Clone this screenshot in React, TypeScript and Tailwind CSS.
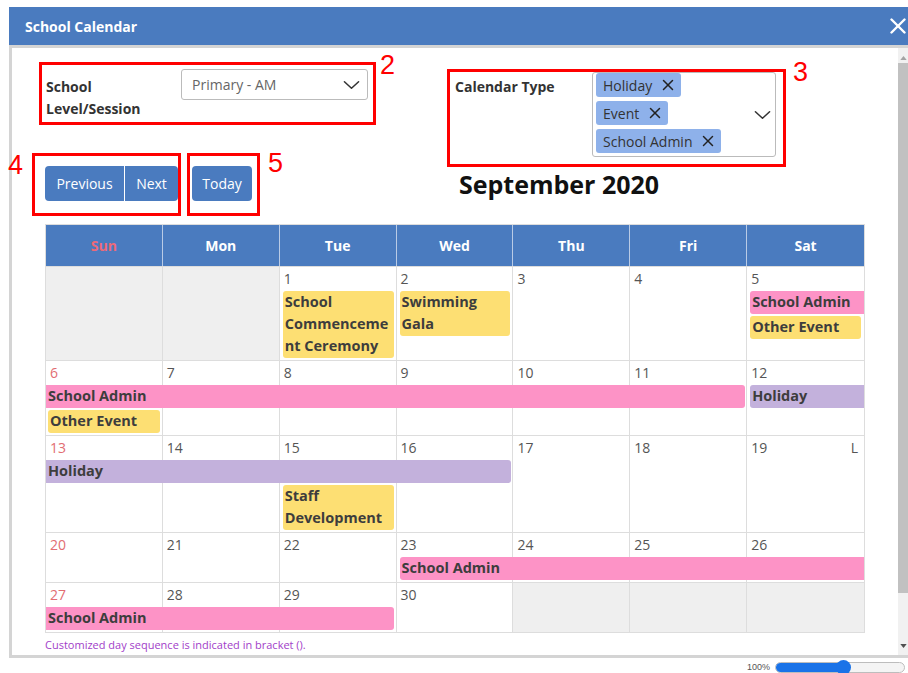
import React from "react";
import { X } from "lucide-react";

type Tone = "yellow" | "pink" | "purple";

const toneBg: Record<Tone, string> = {
  yellow: "bg-[#fddf73]",
  pink: "bg-[#fd93c6]",
  purple: "bg-[#c3b1dc]",
};

const colStart = ["", "col-start-1", "col-start-2", "col-start-3", "col-start-4", "col-start-5", "col-start-6", "col-start-7"];

const dayNames = ["Sun", "Mon", "Tue", "Wed", "Thu", "Fri", "Sat"];

function Chevron({ className = "" }: { className?: string }) {
  return (
    <svg viewBox="0 0 18 10" className={className} fill="none" stroke="#333" strokeWidth="1.6" strokeLinecap="round" strokeLinejoin="round">
      <polyline points="1.5 1.5 9 8.5 16.5 1.5" />
    </svg>
  );
}

function Bar({ label, tone, className = "" }: { label: string; tone: Tone; className?: string }) {
  return (
    <div className={`${toneBg[tone]} ${className} mb-[2px] pb-px pl-[2px] text-[14.5px] font-bold leading-[22px] text-[#3d3d3d] break-words`}>
      {label}
    </div>
  );
}

function Day({ col, day, muted, note }: { col: number; day?: number; muted?: boolean; note?: string }) {
  return (
    <div
      className={`${colStart[col]} row-span-full flex items-start justify-between pl-[4px] pr-[6px] text-[14px] leading-[24px] ${
        col < 7 ? "border-r border-[#dddddd]" : ""
      } ${muted ? "bg-[#efefef]" : "bg-white"} ${col === 1 ? "text-[#e26d72]" : "text-[#555]"}`}
    >
      <span>{day}</span>
      {note && <span className="text-[#555]">{note}</span>}
    </div>
  );
}

function Tag({ label }: { label: string }) {
  return (
    <div className="flex h-[24px] items-center gap-[7px] self-start rounded-[3px] bg-[#8eb1ea] pl-[7px] pr-[4px] text-[14px] text-[#333]">
      {label}
      <X size={18} strokeWidth={2} className="text-[#222]" />
    </div>
  );
}

function Mark({ n, className }: { n: string; className: string }) {
  return <span className={`absolute font-['Liberation_Sans',Arial,sans-serif] text-[27px] leading-none text-[#ff0000] ${className}`}>{n}</span>;
}

const week = "grid grid-cols-7 grid-rows-[24px_auto_auto] border-t border-[#dddddd]";

export default function App() {
  return (
    <div className="relative h-[673px] w-[908px] overflow-hidden bg-white font-['Open_Sans',sans-serif]">
      <div className="pl-[9px] pt-[7px]">
        {/* dialog title bar */}
        <div className="flex h-[38px] items-center justify-between bg-[#4a7bbf] pl-[16px] pr-[2px]">
          <span className="text-[14px] font-bold text-white">School Calendar</span>
          <svg viewBox="0 0 16 16" className="h-[16px] w-[16px]" stroke="white" strokeWidth="2.4" strokeLinecap="round">
            <line x1="1.5" y1="1.5" x2="14.5" y2="14.5" />
            <line x1="14.5" y1="1.5" x2="1.5" y2="14.5" />
          </svg>
        </div>

        <div className="flex h-[613px] border-y-[3px] border-l-[3px] border-[#d4d4d4]">
          <div className="flex-1 overflow-hidden">
            {/* filters + toolbar */}
            <div className="flex items-start pl-[20px]">
              <div className="w-[415px] shrink-0">
                <div className="ml-[7px] mt-[14px] flex h-[63px] w-[337px] items-start border-[3px] border-[#ff0000]">
                  <div className="w-[139px] pl-[4px] pt-[11px] text-[14px] font-bold leading-[22px] text-[#333]">
                    School Level/Session
                  </div>
                  <div className="mt-[4px] flex h-[31px] w-[187px] items-center justify-between rounded-[3px] border border-[#bbbbbb] pl-[10px] pr-[7px] text-[14px] text-[#666]">
                    Primary - AM
                    <Chevron className="h-[10px] w-[17px]" />
                  </div>
                </div>

                <div className="mt-[28px] flex">
                  <div className="h-[63px] w-[149px] border-[3px] border-[#ff0000] pl-[10px] pt-[10px]">
                    <div className="flex text-[14px] text-white">
                      <button className="h-[35px] w-[79px] rounded-l-[4px] bg-[#4a7bbf]">Previous</button>
                      <button className="ml-px h-[35px] w-[53px] rounded-r-[4px] bg-[#4a7bbf]">Next</button>
                    </div>
                  </div>
                  <div className="ml-[6px] h-[63px] w-[73px] border-[3px] border-[#ff0000] pl-[2px] pt-[10px]">
                    <button className="h-[35px] w-[60px] rounded-[4px] bg-[#4a7bbf] text-[14px] text-white">Today</button>
                  </div>
                </div>
              </div>

              <div className="mt-[21px]">
                <div className="flex h-[98px] w-[339px] items-start border-[3px] border-[#ff0000]">
                  <div className="w-[142px] pl-[5px] pt-[4px] text-[14px] font-bold leading-[22px] text-[#333]">Calendar Type</div>
                  <div className="flex h-[85px] w-[184px] items-center justify-between rounded-[3px] border border-[#bbbbbb] pl-[3px] pr-[4px]">
                    <div className="flex flex-col gap-[4px] self-start">
                      <Tag label="Holiday" />
                      <Tag label="Event" />
                      <Tag label="School Admin" />
                    </div>
                    <Chevron className="h-[10px] w-[17px]" />
                  </div>
                </div>
                <div className="ml-[12px] mt-[1px] text-[25px] font-bold leading-[32px] text-[#111]">September 2020</div>
              </div>
            </div>

            {/* month grid */}
            <div className="ml-[33px] mt-[8px] w-[820px] border border-[#dddddd]">
              <div className="grid h-[41px] grid-cols-7 bg-[#4a7bbf] text-[14px] font-bold">
                {dayNames.map((d, i) => (
                  <div
                    key={d}
                    className={`flex items-center justify-center ${i < 6 ? "border-r border-[#b9cbe6]" : ""} ${
                      i === 0 ? "text-[#ec6a78]" : "text-white"
                    }`}
                  >
                    {d}
                  </div>
                ))}
              </div>

              <div className={week}>
                <Day col={1} muted />
                <Day col={2} muted />
                <Day col={3} day={1} />
                <Day col={4} day={2} />
                <Day col={5} day={3} />
                <Day col={6} day={4} />
                <Day col={7} day={5} />
                <Bar tone="yellow" label="School Commencement Ceremony" className="col-start-3 row-start-2 mx-[3px] self-start rounded-[3px]" />
                <Bar tone="yellow" label="Swimming Gala" className="col-start-4 row-start-2 mx-[3px] self-start rounded-[3px]" />
                <div className="col-start-7 row-start-2 flex flex-col">
                  <Bar tone="pink" label="School Admin" className="ml-[3px] rounded-l-[3px]" />
                  <Bar tone="yellow" label="Other Event" className="mx-[3px] rounded-[3px]" />
                </div>
              </div>

              <div className={week}>
                <Day col={1} day={6} />
                <Day col={2} day={7} />
                <Day col={3} day={8} />
                <Day col={4} day={9} />
                <Day col={5} day={10} />
                <Day col={6} day={11} />
                <Day col={7} day={12} />
                <Bar tone="pink" label="School Admin" className="col-span-6 col-start-1 row-start-2 mr-[2px] rounded-r-[3px]" />
                <Bar tone="purple" label="Holiday" className="col-start-7 row-start-2 ml-[3px] rounded-l-[3px]" />
                <Bar tone="yellow" label="Other Event" className="col-start-1 row-start-3 ml-[2px] mr-[3px] rounded-[3px]" />
              </div>

              <div className={week}>
                <Day col={1} day={13} />
                <Day col={2} day={14} />
                <Day col={3} day={15} />
                <Day col={4} day={16} />
                <Day col={5} day={17} />
                <Day col={6} day={18} />
                <Day col={7} day={19} note="L" />
                <Bar tone="purple" label="Holiday" className="col-span-4 col-start-1 row-start-2 mr-[2px] rounded-r-[3px]" />
                <Bar tone="yellow" label="Staff Development" className="col-start-3 row-start-3 mx-[3px] rounded-[3px]" />
              </div>

              <div className={week}>
                <Day col={1} day={20} />
                <Day col={2} day={21} />
                <Day col={3} day={22} />
                <Day col={4} day={23} />
                <Day col={5} day={24} />
                <Day col={6} day={25} />
                <Day col={7} day={26} />
                <Bar tone="pink" label="School Admin" className="col-span-4 col-start-4 row-start-2 ml-[3px] rounded-l-[3px]" />
              </div>

              <div className={week}>
                <Day col={1} day={27} />
                <Day col={2} day={28} />
                <Day col={3} day={29} />
                <Day col={4} day={30} />
                <Day col={5} muted />
                <Day col={6} muted />
                <Day col={7} muted />
                <Bar tone="pink" label="School Admin" className="col-span-3 col-start-1 row-start-2 mr-[3px] rounded-r-[3px]" />
              </div>
            </div>

            <p className="ml-[33px] mt-[4px] text-[11px] leading-[16px] text-[#a23ec9]">
              Customized day sequence is indicated in bracket ().
            </p>
          </div>

          {/* scrollbar */}
          <div className="flex w-[10px] flex-col items-center bg-[#f1f1f1]">
            <svg viewBox="0 0 8 5" className="mt-[8px] h-[4px] w-[7px]">
              <polygon points="0,5 4,0 8,5" fill="#a3a3a3" />
            </svg>
            <div className="mt-[3px] h-[530px] w-full bg-[#c1c1c1]" />
            <div className="flex-1" />
            <svg viewBox="0 0 8 5" className="mb-[7px] h-[4px] w-[7px]">
              <polygon points="0,0 8,0 4,5" fill="#505050" />
            </svg>
          </div>
        </div>
      </div>

      {/* zoom control under the dialog */}
      <div className="flex items-center justify-end pr-[3px] pt-[4px]">
        <span className="mr-[5px] font-['Liberation_Sans',Arial,sans-serif] text-[9px] leading-none text-[#555]">100%</span>
        <div className="relative h-[11px] w-[130px] rounded-full border border-[#bdbdbd] bg-[#f4f4f4]">
          <div className="h-full w-[68px] rounded-full bg-[#1a73e8]" />
          <div className="absolute left-[60px] top-[-3px] h-[15px] w-[15px] rounded-full bg-[#1a73e8]" />
        </div>
      </div>

      <Mark n="2" className="left-[380px] top-[52px]" />
      <Mark n="3" className="left-[793px] top-[59px]" />
      <Mark n="4" className="left-[8px] top-[152px]" />
      <Mark n="5" className="left-[268px] top-[150px]" />
    </div>
  );
}
